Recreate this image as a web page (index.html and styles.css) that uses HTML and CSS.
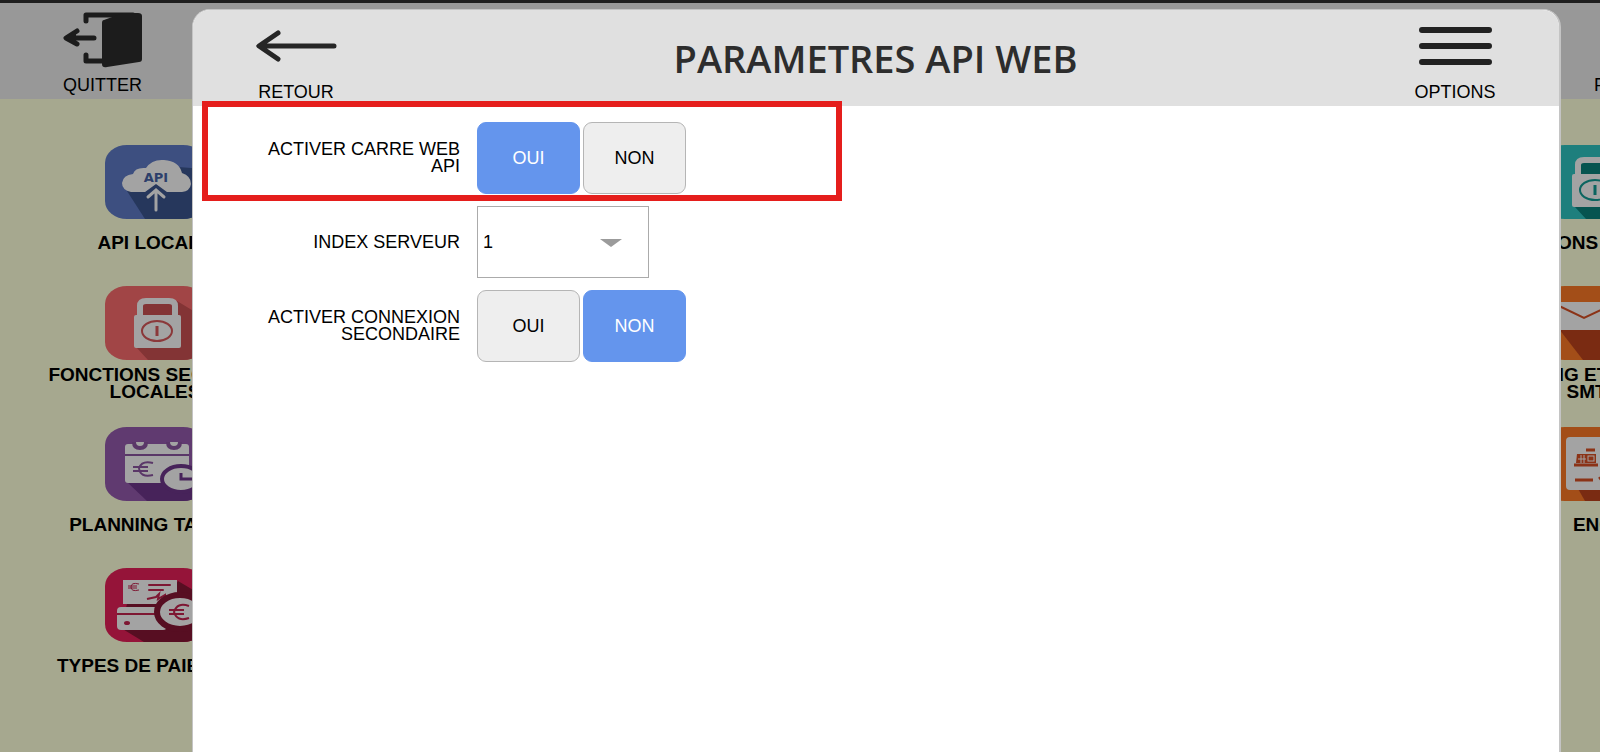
FILE: index.html
```
<!DOCTYPE html>
<html lang="fr">
<head>
    <meta charset="UTF-8">
    <meta name="viewport" content="width=device-width, initial-scale=1.0">
    <title>Parametres API Web</title>
    <link rel="stylesheet" href="styles.css">
</head>
<body>

    <!-- Barre du haut -->
    <header class="topbar">
        <a href="#" class="topbar-link">
            <svg class="icon-door" viewBox="0 0 79 56">
                <path d="M23 9V3H70M23 43V49H45" fill="none" stroke="#1c1c1c" stroke-width="5" stroke-linecap="round" stroke-linejoin="round"/>
                <path d="M41 8L60 1H75Q79 1 79 4V47Q79 50 76 50L44 55Q39 56 39 52V11Q39 8 41 8Z" fill="#1c1c1c"/>
                <path d="M31 26H6M14 19L3 26L14 32" fill="none" stroke="#1c1c1c" stroke-width="5" stroke-linecap="round" stroke-linejoin="round"/>
                <path d="M2 26L13 19V33Z" fill="#1c1c1c"/>
            </svg>
            QUITTER
        </a>
        <a href="#" class="topbar-link">F</a>
    </header>

    <!-- Menu en arrière-plan -->
    <main class="menu">
        <div class="menu-column">
            <a href="#" class="menu-item">
                <svg class="tile blue" viewBox="0 0 100 74">
                    <path d="M22 46L40 74H100V24L73 22Z" fill="#26375c"/>
                    <path d="M26 47Q17 45 17 38Q18 30 28 29Q30 22 41 23Q47 14 59 15Q74 16 77 28Q86 31 86 39Q85 46 77 47Z" fill="#a3a3a3"/>
                    <path d="M40 52L51 44L62 52" fill="none" stroke="#26375c" stroke-width="8"/>
                    <path d="M51 65V46M43 52L51 45L59 52" fill="none" stroke="#a3a3a3" stroke-width="3" stroke-linecap="round"/>
                    <text x="51" y="37" class="tile-text">API</text>
                </svg>
                <span class="menu-label">API LOCALE</span>
            </a>
            <a href="#" class="menu-item">
                <svg class="tile red" viewBox="0 0 100 74">
                    <path d="M32 62L43 74H100V32L72 15L60 40Z" fill="#833435"/>
                    <path d="M35 31V20Q35 15 41 15H64Q70 15 70 20V31" fill="#833435" stroke="#a3a3a3" stroke-width="6"/>
                    <rect x="29" y="29" width="47" height="33" rx="2" fill="#a3a3a3"/>
                    <ellipse cx="52" cy="45" rx="15" ry="10" fill="none" stroke="#8b383a" stroke-width="2"/>
                    <path d="M52 40V50" stroke="#8b383a" stroke-width="3"/>
                </svg>
                <span class="menu-label">FONCTIONS SECURITE<br>LOCALES</span>
            </a>
            <a href="#" class="menu-item">
                <svg class="tile purple" viewBox="0 0 100 74">
                    <path d="M22 55L42 74H100V50L80 40Z" fill="#47235a"/>
                    <rect x="20" y="17" width="64" height="39" rx="3" fill="#a3a3a3"/>
                    <path d="M20 28H84" stroke="#5a3768" stroke-width="2"/>
                    <path d="M29 15Q29 21 35 21Q41 21 41 15M63 15Q63 21 69 21Q75 21 75 15" fill="#a3a3a3" stroke="#5a3768" stroke-width="4"/>
                    <path d="M48 36Q37 33 34 41Q35 51 48 48M28 40H43M28 44H43" fill="none" stroke="#5a3768" stroke-width="2"/>
                    <ellipse cx="76" cy="52" rx="19" ry="13" fill="#a3a3a3" stroke="#47235a" stroke-width="4"/>
                    <path d="M76 46V52H90" fill="none" stroke="#47235a" stroke-width="3"/>
                </svg>
                <span class="menu-label">PLANNING TARIFS</span>
            </a>
            <a href="#" class="menu-item">
                <svg class="tile crimson" viewBox="0 0 100 74">
                    <path d="M16 60L39 74H100V29L73 13L60 36H22Z" fill="#570e22"/>
                    <rect x="18" y="12" width="54" height="24" fill="#a3a3a3"/>
                    <path d="M34 16Q26 14 26 19Q26 24 34 22M23 18H32M23 20H32" fill="none" stroke="#7e1733" stroke-width="1"/>
                    <path d="M44 17H65M44 22H58" stroke="#7e1733" stroke-width="2" stroke-linecap="round"/>
                    <path d="M42 31L51 29L54 26L53 31L60 27V30L67 28" fill="none" stroke="#7e1733" stroke-width="2"/>
                    <rect x="12" y="39" width="50" height="23" rx="4" fill="#a3a3a3"/>
                    <path d="M12 46H62" stroke="#7e1733" stroke-width="2"/>
                    <ellipse cx="22" cy="55" rx="3" ry="2" fill="#7e1733"/>
                    <ellipse cx="75" cy="44" rx="23" ry="17" fill="#a3a3a3" stroke="#570e22" stroke-width="6"/>
                    <path d="M84 38Q72 34 69 44Q72 54 84 50M64 42H79M64 46H79" fill="none" stroke="#7e1733" stroke-width="2"/>
                </svg>
                <span class="menu-label">TYPES DE PAIEMENT</span>
            </a>
        </div>

        <div class="menu-column">
            <a href="#" class="menu-item">
                <svg class="tile teal" viewBox="0 0 100 74">
                    <path d="M32 62L43 74H100V32L72 15L60 40Z" fill="#065450"/>
                    <path d="M35 31V20Q35 15 41 15H64Q70 15 70 20V31" fill="#065450" stroke="#a3a3a3" stroke-width="6"/>
                    <rect x="29" y="29" width="47" height="33" rx="2" fill="#a3a3a3"/>
                    <ellipse cx="52" cy="45" rx="15" ry="10" fill="none" stroke="#0b6560" stroke-width="2"/>
                    <path d="M52 40V50" stroke="#0b6560" stroke-width="3"/>
                </svg>
                <span class="menu-label">FONCTIONS SECURITE</span>
            </a>
            <a href="#" class="menu-item">
                <svg class="tile orange" viewBox="0 0 100 74">
                    <path d="M16 43L40 74H100V43Z" fill="#7a2b12"/>
                    <rect x="12" y="16" width="62" height="28" fill="#a3a3a3"/>
                    <path d="M12 18L41 32L70 18" fill="none" stroke="#8b3317" stroke-width="2"/>
                </svg>
                <span class="menu-label">MAILING ET CONFIG<br>SMTP</span>
            </a>
            <a href="#" class="menu-item">
                <svg class="tile orange" viewBox="0 0 100 74">
                    <path d="M34 60L42 74H100V20Z" fill="#7a2b12"/>
                    <rect x="23" y="10" width="60" height="53" rx="4" fill="#a3a3a3"/>
                    <path d="M43 23H52M31 38H55M32 53H50M56 52L60 49" stroke="#8b3317" stroke-width="3"/>
                    <path d="M33 36L34 27H53V36Z" fill="#8b3317"/>
                    <path d="M35 32H43M38 28V36M41 28V36" stroke="#a3a3a3" stroke-width="1"/>
                    <rect x="45" y="29" width="6" height="5" fill="none" stroke="#a3a3a3"/>
                </svg>
                <span class="menu-label">ENC</span>
            </a>
        </div>
    </main>

    <!-- Fenêtre des paramètres -->
    <section class="modal">
        <div class="modal-header">
            <button type="button" class="header-button">
                <svg class="icon-back" viewBox="0 0 82 32">
                    <path d="M79 16H8M23 3L4 16L23 29" fill="none" stroke="#262626" stroke-width="5" stroke-linecap="round" stroke-linejoin="round"/>
                    <path d="M1 16L11 10V22Z" fill="#262626"/>
                </svg>
                RETOUR
            </button>
            <h1>PARAMETRES API WEB</h1>
            <button type="button" class="header-button">
                <svg class="icon-menu" viewBox="0 0 73 39">
                    <path d="M3 4H70M3 20H70M3 36H70" stroke="#222" stroke-width="6" stroke-linecap="round"/>
                </svg>
                OPTIONS
            </button>
        </div>

        <form class="settings">
            <div class="row highlight" role="group" aria-labelledby="label-api">
                <span class="row-label" id="label-api">ACTIVER CARRE WEB API</span>
                <div class="choices">
                    <button type="button" class="choice active" aria-pressed="true">OUI</button>
                    <button type="button" class="choice" aria-pressed="false">NON</button>
                </div>
            </div>
            <div class="row">
                <label class="row-label" for="index-serveur">INDEX SERVEUR</label>
                <div class="select-box">
                    <select id="index-serveur">
                        <option>1</option>
                    </select>
                    <svg class="select-arrow" viewBox="0 0 22 8"><path d="M0 0H22L11 8Z" fill="#9b9b9b"/></svg>
                </div>
            </div>
            <div class="row" role="group" aria-labelledby="label-connexion">
                <span class="row-label" id="label-connexion">ACTIVER CONNEXION SECONDAIRE</span>
                <div class="choices">
                    <button type="button" class="choice" aria-pressed="false">OUI</button>
                    <button type="button" class="choice active" aria-pressed="true">NON</button>
                </div>
            </div>
        </form>
    </section>

</body>
</html>
```
FILE: styles.css
```
/* Style général */
*, *::after {
    box-sizing: border-box;
}

body {
    font-family: "Liberation Sans", Arial, sans-serif;
    font-size: 18px;
    line-height: 17px;
    margin: 0;
    min-height: 100vh;
    background-color: #a6a88f;
    color: #000;
    overflow: hidden;
}

a {
    color: inherit;
    text-decoration: none;
}

button, select {
    font: inherit;
    color: inherit;
}

/* Barre du haut */
.topbar {
    display: flex;
    justify-content: space-between;
    height: 99px;
    padding: 9px 0 0 63px;
    margin-right: -5px;
    border-top: 3px solid #1e1e1e;
    background-color: #989898;
}

.topbar-link {
    display: flex;
    flex-direction: column;
    align-items: center;
    justify-content: flex-end;
    gap: 9px;
    padding-bottom: 5px;
}

.icon-door {
    width: 79px;
    height: 56px;
}

/* Menu en arrière-plan, la dernière colonne déborde à droite */
.menu {
    display: flex;
    justify-content: space-between;
    margin-right: -112px;
    padding: 46px 0 0 36px;
}

.menu-column {
    display: flex;
    flex-direction: column;
    gap: 21px;
    width: 238px;
}

.menu-item {
    display: flex;
    flex-direction: column;
    align-items: center;
    font-size: 19px;
    font-weight: bold;
    text-align: center;
}

.menu-label {
    display: flex;
    flex-direction: column;
    align-items: center;
    justify-content: center;
    height: 46px;
}

.tile {
    width: 100px;
    height: 74px;
    border-radius: 22px / 18px;
}

.tile-text {
    font-family: "DejaVu Sans", sans-serif;
    font-size: 13px;
    font-weight: bold;
    fill: #2d3f6b;
    text-anchor: middle;
}

.blue { background-color: #3d4f80; }
.red { background-color: #a14546; }
.purple { background-color: #603a70; }
.crimson { background-color: #951439; }
.teal { background-color: #1e7f7d; }
.orange { background-color: #a34e18; }

/* Fenêtre */
.modal {
    position: absolute;
    top: 9px;
    bottom: 0;
    left: 12%;
    right: 39px;
    border: 1px solid #c4c4c4;
    border-width: 1px 2px 0 1px;
    border-radius: 18px 18px 0 0;
    background-color: #fff;
}

.modal-header {
    display: flex;
    justify-content: space-between;
    height: 96px;
    padding: 0 58px 5px 57px;
    border-radius: 17px 17px 0 0;
    background-color: #e0e0e0;
}

.modal-header h1 {
    margin: 0;
    font-family: "Open Sans", sans-serif;
    font-size: 38px;
    font-weight: 600;
    line-height: 96px;
    color: #2d2d2d;
}

.header-button {
    display: flex;
    flex-direction: column;
    align-items: center;
    justify-content: flex-end;
    width: 92px;
    padding: 0;
    border: none;
    background: none;
    cursor: pointer;
}

.icon-back {
    width: 82px;
    height: 32px;
    margin-bottom: 22px;
}

.icon-menu {
    width: 73px;
    height: 39px;
    margin-bottom: 19px;
}

/* Formulaire */
.settings {
    display: flex;
    flex-direction: column;
    gap: 12px;
    padding: 16px 12px;
}

.row {
    position: relative;
    display: flex;
    align-items: center;
    gap: 17px;
    height: 72px;
    padding-left: 35px;
}

.row-label {
    width: 220px;
    text-align: right;
}

/* Cadre rouge autour de la ligne */
.highlight::after {
    content: "";
    position: absolute;
    top: -21px;
    bottom: -7px;
    left: -3px;
    width: 640px;
    border: 6px solid #e51e1c;
    pointer-events: none;
}

.choices {
    display: flex;
    gap: 3px;
}

.choice {
    width: 103px;
    height: 72px;
    border: 1px solid #b5b5b5;
    border-radius: 9px;
    background-color: #eee;
    cursor: pointer;
}

.choice.active {
    border-color: #6495ed;
    background-color: #6495ed;
    color: #fff;
}

.select-box {
    position: relative;
    width: 172px;
}

.select-box select {
    width: 100%;
    height: 72px;
    padding: 0 5px;
    border: 1px solid #ababab;
    border-radius: 0;
    background-color: #fff;
    appearance: none;
}

.select-arrow {
    position: absolute;
    top: 33px;
    right: 27px;
    width: 22px;
    height: 8px;
    pointer-events: none;
}
```
